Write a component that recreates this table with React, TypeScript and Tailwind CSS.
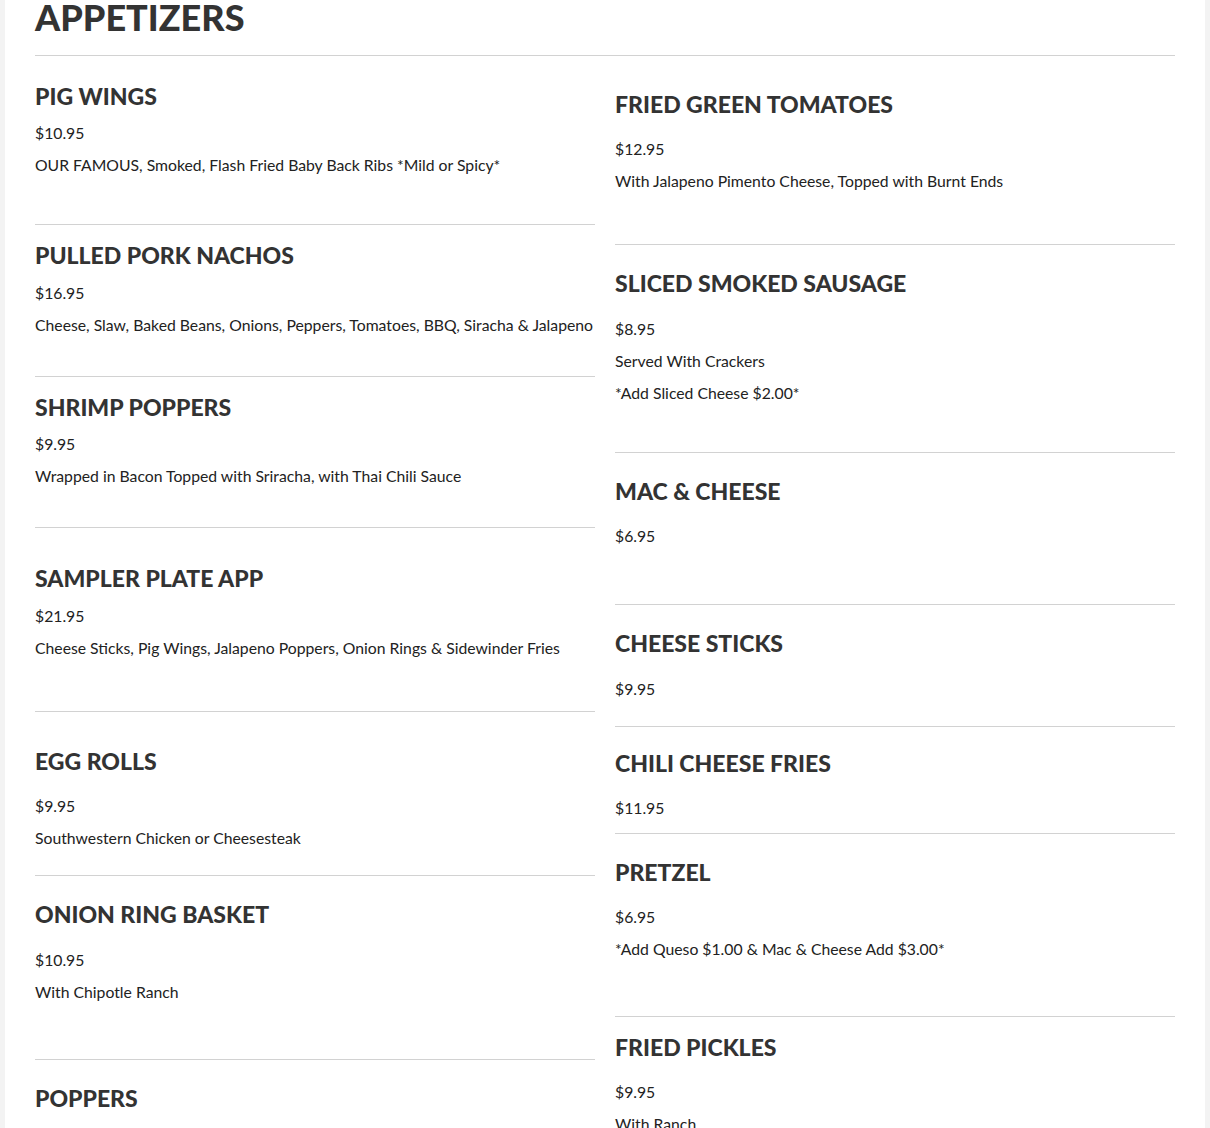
import React from "react";

type Item = {
  name: string;
  lines: string[];
  pt: string;
  mt: string;
  pb: string;
  last?: boolean;
};

const left: Item[] = [
  { name: "PIG WINGS", lines: ["$10.95", "OUR FAMOUS, Smoked, Flash Fried Baby Back Ribs *Mild or Spicy*"], pt: "pt-[25px]", mt: "mt-[6px]", pb: "pb-[43px]" },
  { name: "PULLED PORK NACHOS", lines: ["$16.95", "Cheese, Slaw, Baked Beans, Onions, Peppers, Tomatoes, BBQ, Siracha & Jalapeno"], pt: "pt-[15px]", mt: "mt-[7px]", pb: "pb-[35px]" },
  { name: "SHRIMP POPPERS", lines: ["$9.95", "Wrapped in Bacon Topped with Sriracha, with Thai Chili Sauce"], pt: "pt-[15px]", mt: "mt-[6px]", pb: "pb-[35px]" },
  { name: "SAMPLER PLATE APP", lines: ["$21.95", "Cheese Sticks, Pig Wings, Jalapeno Poppers, Onion Rings & Sidewinder Fries"], pt: "pt-[35px]", mt: "mt-[7px]", pb: "pb-[47px]" },
  { name: "EGG ROLLS", lines: ["$9.95", "Southwestern Chicken or Cheesesteak"], pt: "pt-[34px]", mt: "mt-[14px]", pb: "pb-[21px]" },
  { name: "ONION RING BASKET", lines: ["$10.95", "With Chipotle Ranch"], pt: "pt-[23px]", mt: "mt-[15px]", pb: "pb-[51px]" },
  { name: "POPPERS", lines: ["$9.95", "Jalapeno Poppers with Ranch"], pt: "pt-[23px]", mt: "mt-[14px]", pb: "pb-[40px]", last: true },
];

const right: Item[] = [
  { name: "FRIED GREEN TOMATOES", lines: ["$12.95", "With Jalapeno Pimento Cheese, Topped with Burnt Ends"], pt: "pt-[33px]", mt: "mt-[14px]", pb: "pb-[47px]" },
  { name: "SLICED SMOKED SAUSAGE", lines: ["$8.95", "Served With Crackers", "*Add Sliced Cheese $2.00*"], pt: "pt-[23px]", mt: "mt-[15px]", pb: "pb-[43px]" },
  { name: "MAC & CHEESE", lines: ["$6.95"], pt: "pt-[23px]", mt: "mt-[14px]", pb: "pb-[52px]" },
  { name: "CHEESE STICKS", lines: ["$9.95"], pt: "pt-[23px]", mt: "mt-[15px]", pb: "pb-[21px]" },
  { name: "CHILI CHEESE FRIES", lines: ["$11.95"], pt: "pt-[21px]", mt: "mt-[14px]", pb: "pb-[9px]" },
  { name: "PRETZEL", lines: ["$6.95", "*Add Queso $1.00 & Mac & Cheese Add $3.00*"], pt: "pt-[23px]", mt: "mt-[14px]", pb: "pb-[51px]" },
  { name: "FRIED PICKLES", lines: ["$9.95", "With Ranch"], pt: "pt-[15px]", mt: "mt-[14px]", pb: "pb-[40px]", last: true },
];

function MenuItem({ item }: { item: Item }) {
  return (
    <div className={(item.last ? "" : "border-b border-[#d2d2d2] ") + item.pt + " " + item.pb}>
      <h3 className="text-[23px] leading-[30px] font-black text-[#333333]">{item.name}</h3>
      <div className={item.mt}>
        {item.lines.map((l, i) => (
          <p key={i} className="whitespace-nowrap text-[15.75px] leading-[32px] text-[#222222]">
            {l}
          </p>
        ))}
      </div>
    </div>
  );
}

export default function App() {
  return (
    <div className="h-[1128px] overflow-hidden bg-[#f3f3f3] px-[5px]" style={{ fontFamily: "Lato, 'Open Sans', sans-serif" }}>
      <div className="min-h-full bg-white px-[30px]">
        <h1 className="border-b border-[#d2d2d2] pb-[21px] text-[36px] leading-[34px] font-black text-[#333333]">APPETIZERS</h1>
        <div className="grid grid-cols-2 items-start gap-x-5">
          <div className="flex flex-col">
            {left.map((it) => (
              <MenuItem key={it.name} item={it} />
            ))}
          </div>
          <div className="flex flex-col">
            {right.map((it) => (
              <MenuItem key={it.name} item={it} />
            ))}
          </div>
        </div>
      </div>
    </div>
  );
}
